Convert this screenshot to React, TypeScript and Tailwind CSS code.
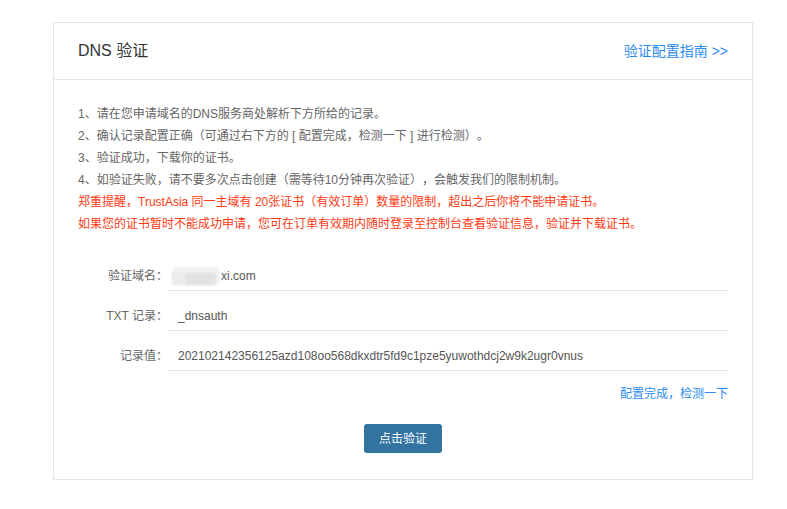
import React from "react";

const font = { fontFamily: '"Liberation Sans", "Noto Sans CJK SC", sans-serif' };

function Row({ label, children }: { label: string; children: React.ReactNode }) {
  return (
    <div className="flex h-[40px]">
      <div className="w-[90px] shrink-0 text-right text-[12px] leading-[20px] text-[#666] pt-[15px]">{label}</div>
      <div className="flex-1 h-[40px] border-b border-[#e8e8e8] pl-[10px] text-[12px] leading-[20px] text-[#555] pt-[15px] overflow-visible">
        {children}
      </div>
    </div>
  );
}

export default function App() {
  return (
    <div className="w-[787px] h-[509px] bg-white pt-[22px] pl-[53px] [text-spacing-trim:space-all]" style={font}>
      <div className="w-[700px] border border-[#e6e6e6] bg-white">
        <div className="h-[57px] flex items-center justify-between px-[24px] border-b border-[#e6e6e6]">
          <div className="text-[16px] text-[#333]">DNS 验证</div>
          <div className="text-[14px] text-[#2a8cf0]">验证配置指南 &gt;&gt;</div>
        </div>
        <div className="px-[24px] pt-[23px] pb-[26px]">
          <div className="text-[12px] leading-[22px] text-[#666]">
            <div>1、请在您申请域名的DNS服务商处解析下方所给的记录。</div>
            <div>2、确认记录配置正确（可通过右下方的 [ 配置完成，检测一下 ] 进行检测）。</div>
            <div>3、验证成功，下载你的证书。</div>
            <div>4、如验证失败，请不要多次点击创建（需等待10分钟再次验证），会触发我们的限制机制。</div>
            <div className="text-[#ff3a12]">郑重提醒，TrustAsia 同一主域有 20张证书（有效订单）数量的限制，超出之后你将不能申请证书。</div>
            <div className="text-[#ff3a12]">如果您的证书暂时不能成功申请，您可在订单有效期内随时登录至控制台查看验证信息，验证并下载证书。</div>
          </div>
          <div className="mt-[16px]">
            <Row label="验证域名：">
              <div className="flex items-center h-[20px] ml-[-6px]">
                <div className="relative w-[48px] h-[18px] mr-[1px]">
                  <div className="absolute inset-0 rounded-[6px] bg-[#eff0f0] blur-[1px]" />
                  <div className="absolute left-[13px] top-[6px] w-[31px] h-[12px] bg-[#e1e2e3] blur-[1px]" />
                  <div className="absolute left-[0px] top-[6px] w-[13px] h-[12px] bg-[#ebecec] blur-[1px]" />
                </div>
                <span>xi.com</span>
              </div>
            </Row>
            <Row label="TXT 记录：">_dnsauth</Row>
            <Row label="记录值：">202102142356125azd108oo568dkxdtr5fd9c1pze5yuwothdcj2w9k2ugr0vnus</Row>
          </div>
          <div className="mt-[13px] text-right text-[12px] leading-[20px] text-[#2a8cf0]">配置完成，检测一下</div>
          <div className="mt-[20px] flex justify-center">
            <button className="w-[78px] h-[29px] rounded-[3px] bg-[#32739f] text-white text-[12px]">点击验证</button>
          </div>
        </div>
      </div>
    </div>
  );
}
